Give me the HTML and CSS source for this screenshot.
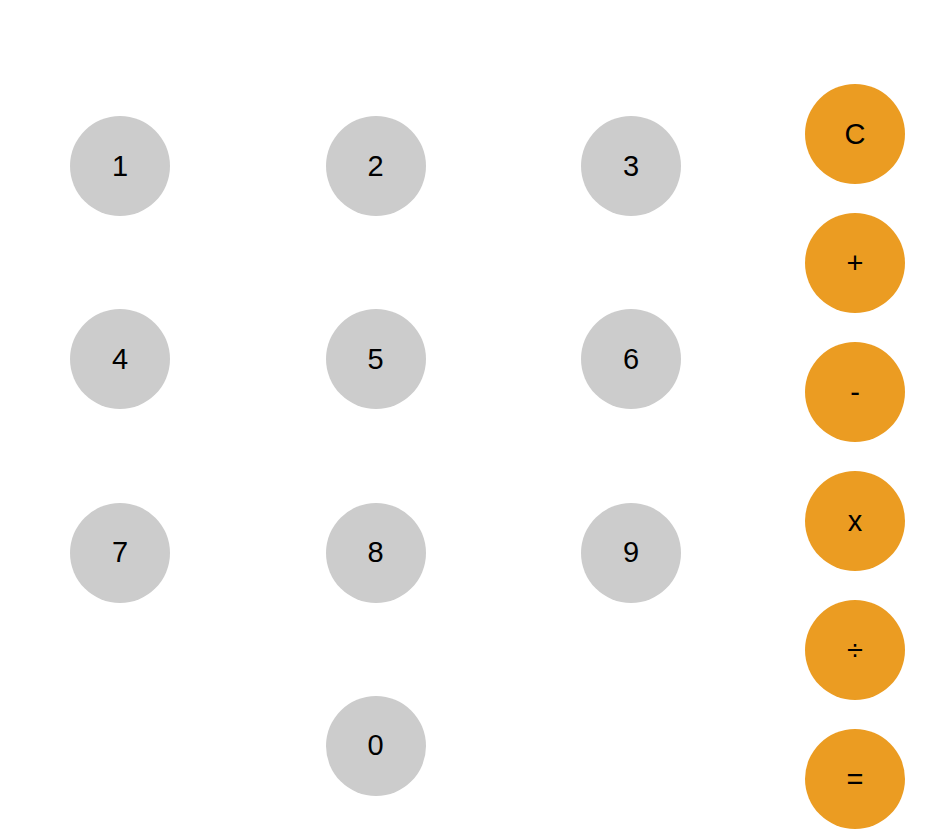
FILE: index.html
```html
<!DOCTYPE html>
<html>
<head>
<meta charset="utf-8">
<link rel="stylesheet" href="styles.css">
</head>
<body>
<div class="calc">
  <div class="digits">
    <div class="btn num">1</div>
    <div class="btn num">2</div>
    <div class="btn num">3</div>
    <div class="btn num">4</div>
    <div class="btn num">5</div>
    <div class="btn num">6</div>
    <div class="btn num">7</div>
    <div class="btn num">8</div>
    <div class="btn num">9</div>
    <div class="btn num zero">0</div>
  </div>
  <div class="ops">
    <div class="btn op">C</div>
    <div class="btn op">+</div>
    <div class="btn op">-</div>
    <div class="btn op">x</div>
    <div class="btn op">÷</div>
    <div class="btn op">=</div>
  </div>
</div>
</body>
</html>
```

FILE: styles.css
```css
html, body {
  margin: 0;
  padding: 0;
  background: #ffffff;
}
body {
  font-family: "Liberation Sans", Arial, sans-serif;
  color: #000;
}
.calc {
  display: flex;
  align-items: flex-start;
}
.digits {
  display: grid;
  grid-template-columns: 100px 100px 100px;
  column-gap: 155.5px;
  row-gap: 93.3px;
  margin-top: 116px;
  margin-left: 70px;
}
.zero {
  grid-column: 2;
}
.ops {
  display: flex;
  flex-direction: column;
  gap: 29px;
  margin-top: 84px;
  margin-left: auto;
  margin-right: 30px;
}
.btn {
  width: 100px;
  height: 100px;
  border-radius: 50%;
  display: flex;
  align-items: center;
  justify-content: center;
  font-size: 29px;
  line-height: 1;
}
.num {
  background: #cccccc;
}
.op {
  background: #eb9c22;
}
```
